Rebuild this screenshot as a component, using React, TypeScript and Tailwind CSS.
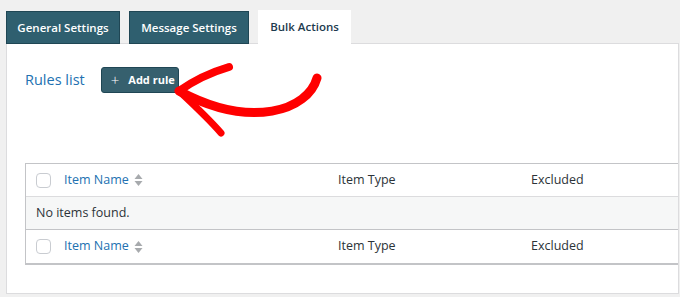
import React from "react";

const font = { fontFamily: '"Open Sans", "Noto Sans", sans-serif' };

function SortIcon() {
  return (
    <svg width="9" height="14" viewBox="0 0 9 14" className="ml-[5px]">
      <path d="M4.5 1 L8.5 6 L0.5 6 Z" fill="#a7aaad" />
      <path d="M4.5 13 L8.5 8 L0.5 8 Z" fill="#a7aaad" />
    </svg>
  );
}

function Checkbox() {
  return (
    <span className="block h-[15px] w-[15px] rounded-[4px] border border-[#c9ccd1] bg-white" />
  );
}

function HeaderRow({ last }: { last?: boolean }) {
  return (
    <div
      className={
        "grid h-[33px] grid-cols-[38px_274px_193px_1fr] items-center bg-white text-[12.5px] text-[#2c3338]" +
        (last ? "" : " border-b border-[#dcdcde]")
      }
    >
      <div className="pl-[10px]">
        <Checkbox />
      </div>
      <div className="flex items-center text-[#2271b1]">
        Item Name
        <SortIcon />
      </div>
      <div>Item Type</div>
      <div>Excluded</div>
    </div>
  );
}

export default function App() {
  return (
    <div
      className="relative h-[297px] w-[680px] overflow-hidden bg-[#f0f0f0] pt-[10px]"
      style={font}
    >
      {/* tabs */}
      <div className="flex h-[33px] items-end pl-[6px]">
        <button className="-mb-px h-[33px] w-[114px] border border-[#1f4654] bg-[#2f5f6f] text-[11.5px] font-semibold text-white">
          General Settings
        </button>
        <button className="-mb-px ml-[9px] h-[33px] w-[120px] border border-[#1f4654] bg-[#2f5f6f] text-[11.5px] font-semibold text-white">
          Message Settings
        </button>
        <button className="relative z-10 -mb-px ml-[9px] h-[34px] w-[93px] bg-white text-[11.5px] font-semibold text-[#1d3a4e]">
          Bulk Actions
        </button>
      </div>

      {/* panel */}
      <div className="ml-[6px] h-[251px] w-[673px] overflow-hidden border border-[#dcdcde] bg-white pl-[18px] pt-[23px]">
        <div className="flex h-[26px] items-center">
          <h2 className="text-[14.5px] font-normal text-[#2271b1]">Rules list</h2>
          <button className="ml-[16px] flex h-[26px] w-[78px] items-center rounded-[3px] border border-[#1f4654] bg-[#36606e] pl-[9px] text-[11px] font-bold text-white">
            <span className="mr-[9px] text-[15px] font-light leading-none">+</span>
            Add rule
          </button>
        </div>

        <div className="mt-[70px] w-[680px] border border-[#c3c4c7] border-b-2">
          <HeaderRow />
          <div className="flex h-[33px] items-center border-b border-[#c3c4c7] bg-[#f6f7f7] pl-[10px] text-[12.5px] text-[#2c3338]">
            No items found.
          </div>
          <HeaderRow last />
        </div>
      </div>

      {/* red annotation arrow */}
      <svg
        className="pointer-events-none absolute left-0 top-0"
        width="680"
        height="297"
        viewBox="0 0 680 297"
      >
        <g
          fill="none"
          stroke="#ff0000"
          strokeLinecap="round"
          strokeLinejoin="round"
        >
          <path d="M317 78 C308 110 252 130 179 91" strokeWidth="9" />
          <path d="M179 91 C196 79 212 72 229 67" strokeWidth="8" />
          <path d="M179 91 C194 105 209 119 221 133" strokeWidth="7" />
        </g>
      </svg>
    </div>
  );
}
